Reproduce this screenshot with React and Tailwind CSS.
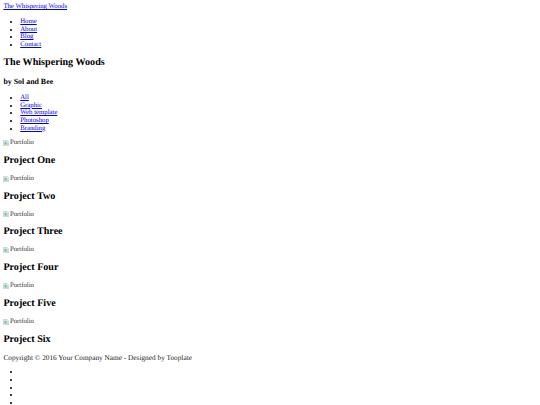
const navLinks = ['Home', 'About', 'Blog', 'Contact']
const categories = ['All', 'Graphic', 'Web template', 'Photoshop', 'Branding']
const projects = ['Project One', 'Project Two', 'Project Three', 'Project Four', 'Project Five', 'Project Six']

function BrokenImage({ alt }) {
  return (
    <div className="flex h-[7.4px] items-center">
      <svg width="6" height="6" viewBox="0 0 16 16" className="mr-[0.5px] shrink-0">
        <path d="M1 1h10l4 4v10H1z" fill="#fff" stroke="#9a9a9a" strokeWidth="1.2" />
        <rect x="3" y="4" width="9" height="6" fill="#8ec5e8" />
        <path d="M3 12l3-4 3 3 2-2 2 3z" fill="#5aa84a" />
      </svg>
      <span className="text-[#333]">{alt}</span>
    </div>
  )
}

export default function App() {
  return (
    <div className="bg-white p-[3.375px] font-['Liberation_Serif','Times_New_Roman',serif] text-[6.75px] leading-[7.7px] text-black [text-rendering:geometricPrecision]">
      <header>
        <a href="#" className="text-[#0000ee] underline">
          The Whispering Woods
        </a>
        <ul className="my-[6.75px] list-disc pl-[16.875px]">
          {navLinks.map((item) => (
            <li key={item}>
              <a href="#" className="text-[#0000ee] underline">
                {item}
              </a>
            </li>
          ))}
        </ul>
      </header>

      <section>
        <h1 className="my-[8.4px] text-[10.125px] leading-[11.6px] font-bold">The Whispering Woods</h1>
        <h3 className="my-[7.9px] text-[7.9px] leading-[9px] font-bold">by Sol and Bee</h3>

        <ul className="my-[6.75px] list-disc pl-[16.875px]">
          {categories.map((item) => (
            <li key={item}>
              <a href="#" className="text-[#0000ee] underline">
                {item}
              </a>
            </li>
          ))}
        </ul>

        {projects.map((title) => (
          <div key={title}>
            <BrokenImage alt="Portfolio" />
            <h2 className="my-[8.4px] text-[10.125px] leading-[11.6px] font-bold">{title}</h2>
          </div>
        ))}
      </section>

      <footer>
        <p className="my-[6.75px] text-[7.3px] text-[#222]">
          Copyright © 2016 Your Company Name - Designed by Tooplate
        </p>
        <ul className="my-[6.75px] list-disc pl-[16.875px]">
          {[0, 1, 2, 3, 4].map((i) => (
            <li key={i}>&nbsp;</li>
          ))}
        </ul>
      </footer>
    </div>
  )
}
